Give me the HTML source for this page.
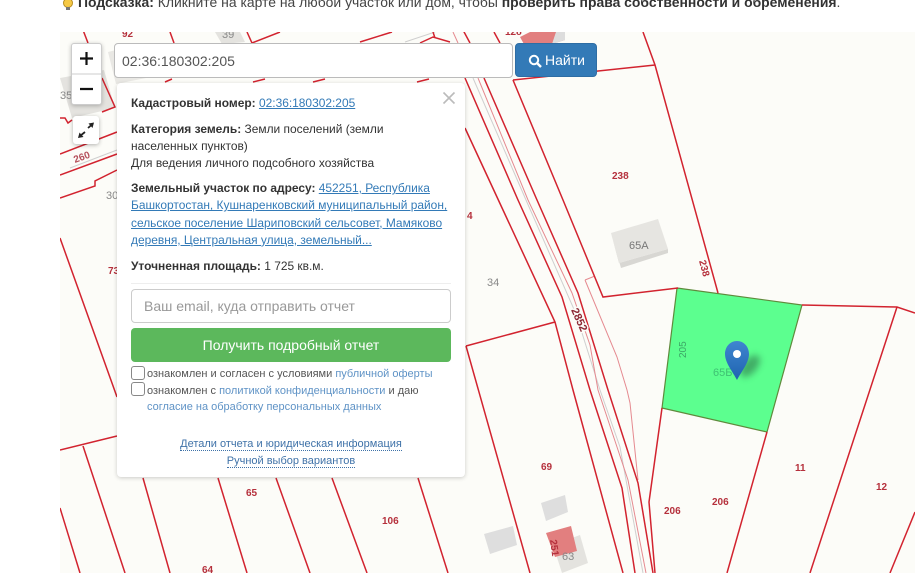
<!DOCTYPE html>
<html lang="ru"><head><meta charset="utf-8"><title>Кадастровая карта</title>
<style>
html,body{margin:0;padding:0;background:#fff;width:915px;height:573px;overflow:hidden;font-family:"Liberation Sans",Arial,sans-serif;color:#333}
*{box-sizing:border-box}
.a{position:absolute}
#hint{left:78px;top:-6px;font-size:13.93px;line-height:16px;white-space:nowrap;color:#444}
#hint b{color:#333}
svg text{font-family:"Liberation Sans",sans-serif}
.r{fill:none;stroke:#d2232f;stroke-width:1.5}
.t{fill:none;stroke:#e58a90;stroke-width:1}
.g{fill:none;stroke:#cfcfcf;stroke-width:1}
.l{fill:#b5303c;font-size:10px;font-weight:bold}
.n{fill:#888;font-size:11px}
#zoom{left:71px;top:43px;width:31px;height:62px;background:#fff;border:1px solid #ccc;border-radius:3px;box-shadow:0 1px 4px rgba(0,0,0,.25)}
#zoom svg{display:block}
#full{left:73px;top:116px;width:26px;height:28px;background:#fff;border-radius:3px;box-shadow:0 1px 4px rgba(0,0,0,.3)}
#inp{left:114px;top:43px;width:399px;height:35px;background:#fff;border:1px solid #bbb;border-radius:4px;font-size:14px;line-height:35px;padding-left:7px;color:#555}
#btn{left:515px;top:43px;width:82px;height:34px;background:#337ab7;border:1px solid #2e6da4;border-radius:4px;color:#fff;font-size:14px;line-height:32px;white-space:nowrap}
#panel{left:117px;top:83px;width:348px;height:394px;background:#fff;border-radius:4px;box-shadow:0 1px 4px rgba(0,0,0,.2);font-size:11.95px;line-height:17.3px}
#panel a{color:#337ab7;text-decoration:underline}
.p{position:absolute;left:14px;white-space:nowrap}
.sm{font-size:11px;line-height:16.5px;color:#555}
.sm a{color:#5f93c6!important;text-decoration:none!important}
.cb{position:absolute;left:14px;width:14px;height:14px;border:1px solid #888;border-radius:3px;background:#fff}
.dot{color:#3f72a8!important;text-decoration:none!important;border-bottom:1px dotted #3f72a8}
</style></head><body>
<svg class="a" style="left:61px;top:-3px" width="14" height="14" viewBox="0 0 14 14"><circle cx="7" cy="6" r="4.5" fill="#f6c945" stroke="#b98f22"/><rect x="5" y="10" width="4" height="3" fill="#777"/></svg>
<div class="a" id="hint"><b>Подсказка:</b> Кликните на карте на любой участок или дом, чтобы <b>проверить права собственности и обременения</b>.</div>

<svg class="a" style="left:0;top:0" width="915" height="573" viewBox="0 0 915 573">
<defs><clipPath id="m"><rect x="60" y="32" width="855" height="541"/></clipPath>
<linearGradient id="pg" x1="0" y1="0" x2="0" y2="1"><stop offset="0" stop-color="#3f86d0"/><stop offset="1" stop-color="#1f63b0"/></linearGradient>
<filter id="bl" x="-50%" y="-50%" width="200%" height="200%"><feGaussianBlur stdDeviation="3.5"/></filter></defs>
<g clip-path="url(#m)">
<rect x="60" y="32" width="855" height="541" fill="#fcfcf8"/>
<!-- buildings -->
<g fill="#e4e3df">
<polygon points="60,78 104,70 115,108 72,118"/>
<polygon points="108,52 140,44 146,78 116,84" fill="#e9e8e4"/>
<polygon points="215,32 240,32 245,42 222,44"/>
<polygon points="619,263 668,249 668,253 621,268 612,237 611,233" fill="#d8d7d3"/>
<polygon points="611,233 658,219 668,249 619,263" fill="#e6e5e1"/>
<polygon points="541,503 565,495 568,512 546,521" fill="#dedede"/>
<polygon points="484,534 513,526 517,545 490,554" fill="#dedede"/>
<polygon points="553,545 580,535 588,563 562,573"/>
</g>
<polygon points="546,533 571,526 577,551 555,557" fill="#e27f7f"/>
<polygon points="520,37 530,32 563,32 565,40 552,44 525,46" fill="#e27f7f"/>
<polygon points="556,32 565,32 565,40 552,44" fill="#ddd"/>
<!-- green plot -->
<polygon points="677,288 802,305 767,432 662,408" fill="#5cff8f" stroke="#5f8a3c" stroke-width="1.2"/>
<!-- thin road -->
<g class="g"><path d="M526,200 L573,307 L582,333 L600,390 L620,447 L643,573"/><path d="M473,78 L526,200"/><path d="M70,168 L117,150"/><path d="M405,42 L435,32"/></g>
<path class="t" d="M478,78 L528,200 L572,293 L590,345 L598,390 L628,480 L646,573"/>
<path class="t" d="M453,32 L458,43"/>
<path class="t" d="M585,280 L595,276 M585,280 L617,357 L627,390 L630,403 L638,480"/>
<!-- red lines -->
<g class="r">
<path d="M465,128 L503,210 L555,322 L573,390 L623,573"/>
<path d="M465,78 L518,200 L562,297 L590,390 L622,488 L635,573"/>
<path d="M484,78 L537,200 L578,293 L608,390 L638,483 L653,573"/>
<path d="M463,30 L470,43"/>
<path d="M494,32 L500,43"/>
<path d="M466,346 L555,322"/>
<path d="M466,346 L530,573"/>
<path d="M513,80 L563,200 L603,297 L678,288"/>
<path d="M643,32 L655,65 L718,293"/>
<path d="M513,80 L655,65"/>
<path d="M662,408 L649,502 L655,573"/>
<path d="M767,432 L727,573"/>
<path d="M802,305 L897,307 L915,313"/>
<path d="M897,307 L810,573"/>
<path d="M915,512 L890,573"/>
<path d="M60,450 L117,436"/>
<path d="M83,446 L125,573"/>
<path d="M60,508 L80,573"/>
<path d="M143,478 L170,573"/>
<path d="M218,478 L247,573"/>
<path d="M276,478 L310,573"/>
<path d="M332,478 L367,573"/>
<path d="M418,478 L448,573"/>
<path d="M60,238 L117,397"/>
<path d="M60,198 L95,186 L95,181 L117,170"/>
<path d="M60,175 L117,154"/>
<path d="M60,154 L117,132"/>
<path d="M83,30 L88,43"/>
<path d="M170,32 L174,43"/>
<path d="M247,32 L252,43 L280,32"/>
<path d="M360,42 L392,32"/>
<path d="M420,43 L433,37 L450,42 M433,32 L435,38"/>
<path d="M102,78 L115,107 L102,112"/>
<path d="M60,118 L65,118 L68,123 L72,120"/>
<path d="M165,82 L172,79 M253,82 L265,79 M313,82 L325,79 M417,82 L429,79"/>
</g>
<!-- labels -->
<text class="l" x="122" y="37">92</text>
<text class="n" x="222" y="38">39</text>
<text class="n" x="60" y="99">35</text>
<text class="n" x="106" y="199">30</text>
<text class="l" x="108" y="274">73</text>
<text class="l" x="467" y="219">4</text>
<text class="n" x="487" y="286">34</text>
<text class="l" x="612" y="179">238</text>
<text x="629" y="249" style="font-size:11px;fill:#777">65A</text>
<text class="l" transform="translate(699,261) rotate(75)" x="0" y="0">238</text>
<text class="l" transform="translate(571,310) rotate(66)" x="0" y="0" style="fill:#8d2a36;font-size:11px;stroke:#fcfcf8;stroke-width:3;paint-order:stroke">2852</text>
<text transform="translate(686,358) rotate(-90)" style="font-size:10px;fill:#3ca766">205</text>
<text x="713" y="376" style="font-size:11px;fill:#3fc273">65Б</text>
<text class="l" x="541" y="470">69</text>
<text class="l" x="795" y="471">11</text>
<text class="l" x="876" y="490">12</text>
<text class="l" x="664" y="514">206</text>
<text class="l" x="712" y="505">206</text>
<text class="l" x="246" y="496">65</text>
<text class="l" x="382" y="524">106</text>
<text class="l" x="202" y="573">64</text>
<text class="l" transform="translate(550,540) rotate(82)" x="0" y="0">251</text>
<text class="n" x="562" y="560">63</text>
<text class="l" transform="translate(75,163) rotate(-20)" x="0" y="0" style="fill:#b5505c">260</text>
<text class="l" x="505" y="35">128</text>
<!-- pin -->
<ellipse cx="750" cy="366" rx="13" ry="7" fill="#2c6a45" opacity=".55" filter="url(#bl)" transform="rotate(-50 750 366)"/>
<path d="M737,341 C730,341 725,347 725,354 C725,363 733,372 737,380 C741,372 749,363 749,354 C749,347 744,341 737,341 Z" fill="url(#pg)"/>
<circle cx="737" cy="354" r="4" fill="#fff"/>
</g>
</svg>

<div class="a" id="zoom"><svg width="29" height="60" viewBox="0 0 29 60"><path d="M8,14.5 H21 M14.5,8 V21 M8,45 H21" stroke="#111" stroke-width="2.2"/><path d="M0,30 H29" stroke="#ccc"/></svg></div>
<div class="a" id="full"><svg width="26" height="28" viewBox="0 0 26 28"><path d="M7,20 L12,16 M15,12 L19,8.5" stroke="#222" stroke-width="1.8"/><path d="M21,6.5 L15.5,7.5 L19.5,12 Z" fill="#222"/><path d="M5,22 L10.5,21 L6.5,16.5 Z" fill="#222"/></svg></div>
<div class="a" id="inp">02:36:180302:205</div>
<div class="a" id="btn"><svg style="position:absolute;left:12px;top:10px" width="14" height="14" viewBox="0 0 14 14"><circle cx="6" cy="6" r="4.2" fill="none" stroke="#fff" stroke-width="2"/><path d="M9,9 L13,13" stroke="#fff" stroke-width="2.4"/></svg><span style="position:absolute;left:29px">Найти</span></div>

<div class="a" id="panel">
<svg class="a" style="left:325px;top:8px" width="14" height="14" viewBox="0 0 14 14"><path d="M1.5,1.5 L12.5,12.5 M12.5,1.5 L1.5,12.5" stroke="#bbb" stroke-width="1.6"/></svg>
<div class="p" style="top:12px"><b>Кадастровый номер:</b> <a>02:36:180302:205</a></div>
<div class="p" style="top:38px;line-height:17px"><b>Категория земель:</b> Земли поселений (земли<br>населенных пунктов)<br>Для ведения личного подсобного хозяйства</div>
<div class="p" style="top:97px"><b>Земельный участок по адресу:</b> <a>452251, Республика</a><br><a>Башкортостан, Кушнаренковский муниципальный район,</a><br><a>сельское поселение Шариповский сельсовет, Мамяково</a><br><a>деревня, Центральная улица, земельный...</a></div>
<div class="p" style="top:175px"><b>Уточненная площадь:</b> 1 725 кв.м.</div>
<div class="a" style="left:14px;top:200px;width:320px;height:1px;background:#eee"></div>
<div class="a" style="left:14px;top:206px;width:320px;height:34px;border:1px solid #ccc;border-radius:4px;font-size:14px;line-height:32px;padding-left:12px;color:#999;white-space:nowrap">Ваш email, куда отправить отчет</div>
<div class="a" style="left:14px;top:245px;width:320px;height:34px;background:#5cb85c;border-radius:4px;color:#fff;font-size:14px;line-height:34px;text-align:center">Получить подробный отчет</div>
<div class="cb" style="top:283px"></div>
<div class="cb" style="top:299px"></div>
<div class="p sm" style="left:30px;top:283px">ознакомлен и согласен с условиями <a>публичной оферты</a><br>ознакомлен с <a>политикой конфиденциальности</a> и даю<br><a>согласие на обработку персональных данных</a></div>
<div class="a" style="left:0;width:348px;top:353px;text-align:center;font-size:11px;line-height:17px"><a class="dot">Детали отчета и юридическая информация</a><br><a class="dot">Ручной выбор вариантов</a></div>
</div>
</body></html>
